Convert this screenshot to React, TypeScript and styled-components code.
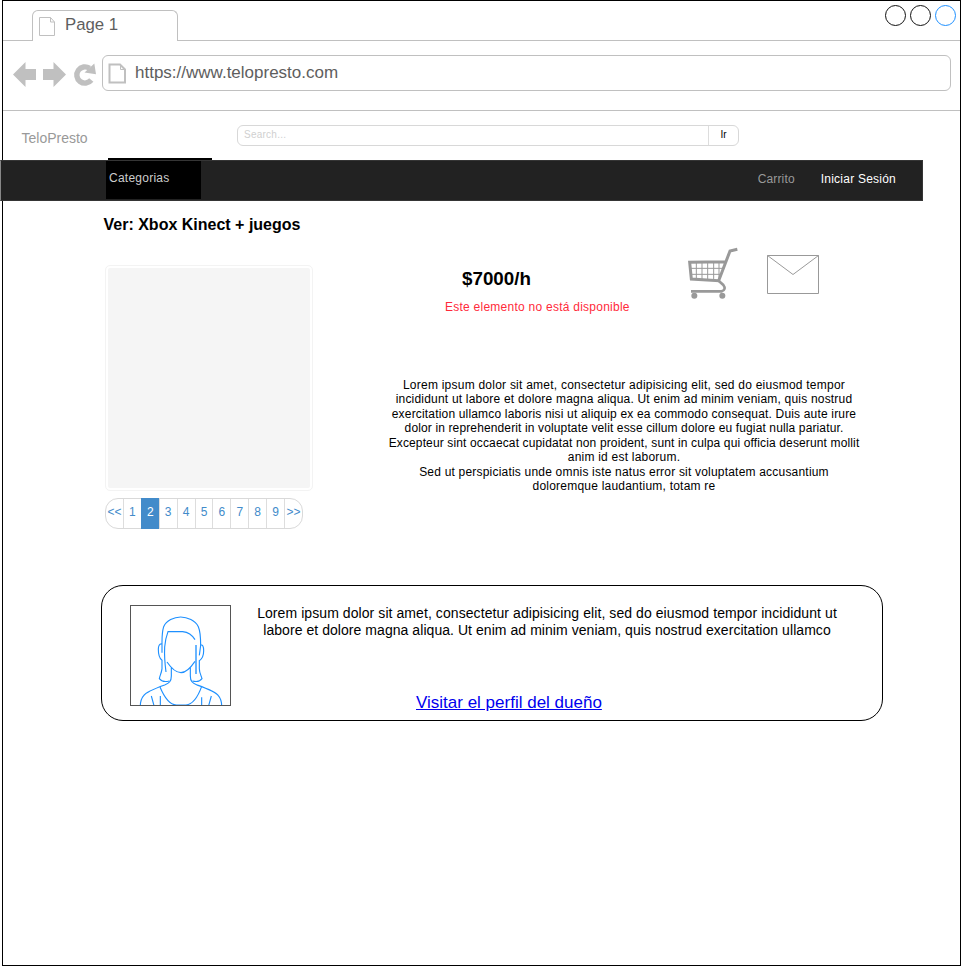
import React from "react";
import styled, { createGlobalStyle } from "styled-components";

const GlobalStyle = createGlobalStyle`
  * { box-sizing: border-box; }
  body { margin: 0; background: #fff; font-family: "Liberation Sans", Arial, sans-serif; color: #000; }
`;

const Frame = styled.div`
  width: 959px;
  height: 966px;
  margin-left: 2px;
  border: 1px solid #000;
  display: flex;
  flex-direction: column;
`;

const TabStrip = styled.div`
  height: 40px;
  flex: none;
  display: flex;
  justify-content: space-between;
  align-items: flex-start;
  padding: 9px 4px 0 29px;
  border-bottom: 1px solid #c0c0c0;
`;

const Tab = styled.div`
  width: 146px;
  height: 31px;
  display: flex;
  gap: 9px;
  padding: 6px 0 0 5px;
  background: #fff;
  border: 1px solid #c0c0c0;
  border-bottom: 0;
  border-radius: 6px 6px 0 0;
  font-size: 16.8px;
  line-height: 16px;
  color: #5e5e5e;
`;

const WindowButtons = styled.div`
  display: flex;
  gap: 4px;
  margin-top: -5px;
`;

const WindowButton = styled.span<{ $color: string }>`
  width: 21px;
  height: 21px;
  border: 1px solid ${(p) => p.$color};
  border-radius: 50%;
`;

const Toolbar = styled.div`
  height: 70px;
  flex: none;
  display: flex;
  align-items: flex-start;
  padding: 14px 9px 0 10px;
  border-bottom: 1px solid #c0c0c0;
`;

const NavIcons = styled.svg`
  width: 89px;
  height: 36px;
  flex: none;
`;

const AddressBar = styled.div`
  flex: 1;
  height: 36px;
  display: flex;
  gap: 9px;
  padding: 7px 0 0 5px;
  border: 1px solid #c0c0c0;
  border-radius: 6px;
  font-size: 17px;
  line-height: 19px;
  color: #5e5e5e;
`;

const Spaced = styled.span<{ $spacing?: number }>`
  letter-spacing: ${(p) => p.$spacing ?? 0}px;
  white-space: nowrap;
`;

const SiteHeader = styled.header`
  height: 47px;
  flex: none;
  display: flex;
  align-items: flex-start;
  padding: 14px 0 0 18.5px;
`;

const Brand = styled.div`
  width: 215.5px;
  padding-top: 5px;
  font-size: 14px;
  line-height: 16px;
  color: #999;
`;

const SearchBox = styled.div`
  width: 502px;
  height: 21px;
  display: flex;
  border: 1px solid #d8d8d8;
  border-radius: 6px;
  font-size: 10px;
  line-height: 18px;
`;

const SearchField = styled.div`
  flex: 1;
  padding-left: 6px;
  color: #d0d0d0;
`;

const SearchButton = styled.div`
  width: 30px;
  border-left: 1px solid #ddd;
  text-align: center;
`;

const MenuLine = styled.div`
  width: 104px;
  height: 2px;
  flex: none;
  margin-left: 105px;
  background: #000;
`;

const NavBar = styled.nav`
  width: 923px;
  height: 41px;
  flex: none;
  margin-left: -3px;
  display: flex;
  background: #222;
  border: 1px solid #353535;
  border-left-color: #888;
  font-size: 12px;
  line-height: 14px;
`;

const CategoryItem = styled.div`
  width: 95px;
  height: 38px;
  margin-left: 105px;
  padding: 10px 0 0 3px;
  background: #000;
  color: #ccc;
`;

const NavLinks = styled.div`
  display: flex;
  gap: 26px;
  margin-left: auto;
  padding: 11px 26px 0 0;
`;

const NavLink = styled.span<{ $color: string }>`
  color: ${(p) => p.$color};
`;

const Title = styled.h1`
  margin: 15px 0 0 100.5px;
  height: 49px;
  flex: none;
  font-size: 16px;
  line-height: 18px;
`;

const Product = styled.section`
  display: flex;
  height: 320px;
  flex: none;
  padding-left: 102px;
`;

const Gallery = styled.div`
  width: 208px;
  display: flex;
  flex-direction: column;
  gap: 7px;
`;

const Photo = styled.div`
  height: 226px;
  padding: 2px;
  border: 1px solid #f3f3f3;
  border-radius: 5px;
  background: #f5f5f5 content-box;
`;

const Pagination = styled.div`
  width: 198px;
  height: 31px;
  display: flex;
  border: 1px solid #d9d9d9;
  border-radius: 13px;
  font-size: 12px;
  line-height: 27px;
  color: #428bca;
  text-align: center;
`;

const PageItem = styled.span<{ $active: boolean }>`
  flex: 1;
  min-width: 0;
  margin: ${(p) => (p.$active ? "-1px 0" : "0")};
  padding-top: ${(p) => (p.$active ? 1 : 0)}px;
  background: ${(p) => (p.$active ? "#428bca" : "transparent")};
  color: ${(p) => (p.$active ? "#fff" : "inherit")};
  border-left: 1px solid ${(p) => (p.$active ? "#428bca" : "#ddd")};
  &:first-child { border-left-color: transparent; margin-left: -1px; }
`;

const Info = styled.div`
  width: 480px;
  margin-left: 71px;
  display: flex;
  flex-direction: column;
`;

const Offer = styled.div`
  height: 112px;
  display: flex;
  margin-top: -18px;
`;

const PriceBlock = styled.div`
  width: 303px;
  padding: 21px 0 0 61px;
`;

const Price = styled.div`
  padding-left: 17px;
  font-size: 18.8px;
  font-weight: bold;
  line-height: 22px;
`;

const Unavailable = styled.div`
  margin-top: 10px;
  font-size: 12px;
  line-height: 14px;
  color: #ff2a3a;
`;

const CartIcon = styled.svg`
  width: 54px;
  height: 54px;
`;

const MailIcon = styled.svg`
  width: 53px;
  height: 40px;
  margin: 8px 0 0 26px;
`;

const Description = styled.div`
  margin-top: 19px;
  display: flex;
  flex-direction: column;
  align-items: center;
  font-size: 12px;
  line-height: 14.45px;
`;

const OwnerCard = styled.section`
  width: 782px;
  height: 136px;
  flex: none;
  margin-left: 98px;
  display: flex;
  border: 1px solid #000;
  border-radius: 22px;
  padding: 19px 0 0 28px;
`;

const Avatar = styled.svg`
  width: 101px;
  height: 101px;
  flex: none;
`;

const OwnerInfo = styled.div`
  width: 581px;
  margin-left: 25.5px;
  display: flex;
  flex-direction: column;
  align-items: center;
  font-size: 14px;
  line-height: 17px;
`;

const ProfileLink = styled.a`
  align-self: flex-start;
  margin: 54px 0 0 159.5px;
  font-size: 17px;
  line-height: 20px;
  color: #0000ee;
  text-decoration: underline;
`;

function FileIcon({ bold = false }: { bold?: boolean }) {
  return (
    <svg width="18" height="22" viewBox="0 0 18 22" fill="none" stroke="#c0c0c0" strokeWidth={bold ? 2 : 1}>
      <path d={bold ? "M1.5 1.5H12L17 6.5V19.5H1.5Z" : "M1.5 .5H12.5L16.5 5V18.5H1.5Z"} />
      <path strokeWidth="1" d={bold ? "M12.5 2V6.5H17" : "M12.5 .5V5H16.5"} />
    </svg>
  );
}

const description: [string, number][] = [
  ["Lorem ipsum dolor sit amet, consectetur adipisicing elit, sed do eiusmod tempor", 0.235],
  ["incididunt ut labore et dolore magna aliqua. Ut enim ad minim veniam, quis nostrud", 0.2],
  ["exercitation ullamco laboris nisi ut aliquip ex ea commodo consequat. Duis aute irure", 0.175],
  ["dolor in reprehenderit in voluptate velit esse cillum dolore eu fugiat nulla pariatur.", 0.13],
  ["Excepteur sint occaecat cupidatat non proident, sunt in culpa qui officia deserunt mollit", 0.135],
  ["anim id est laborum.", 0.22],
  ["Sed ut perspiciatis unde omnis iste natus error sit voluptatem accusantium", 0.2],
  ["doloremque laudantium, totam re", 0.22],
];

const pages = ["<<", "1", "2", "3", "4", "5", "6", "7", "8", "9", ">>"];

export default function App() {
  return (
    <>
      <GlobalStyle />
      <Frame>
        <TabStrip>
          <Tab>
            <FileIcon />
            <Spaced>Page 1</Spaced>
          </Tab>
          <WindowButtons>
            <WindowButton $color="#111" />
            <WindowButton $color="#111" />
            <WindowButton $color="#1e90ff" />
          </WindowButtons>
        </TabStrip>
        <Toolbar>
          <NavIcons viewBox="13 55 89 36">
            <path fill="#c0c0c0" d="M13 74.5L25.5 62V69H36V80H25.5V87ZM66 74.5L53.5 62V69H43V80H53.5V87Z" />
            <path fill="none" stroke="#c0c0c0" strokeWidth="5.4" d="M89.5 68.3A8.1 8.1 0 1 0 91.3 80" />
            <path fill="#c0c0c0" d="M94.3 63.5L96 74.2L84.5 72.5Z" />
          </NavIcons>
          <AddressBar>
            <FileIcon bold />
            <Spaced>https://www.telopresto.com</Spaced>
          </AddressBar>
        </Toolbar>
        <SiteHeader>
          <Brand>TeloPresto</Brand>
          <SearchBox>
            <SearchField><Spaced $spacing={0.25}>Search...</Spaced></SearchField>
            <SearchButton>Ir</SearchButton>
          </SearchBox>
        </SiteHeader>
        <MenuLine />
        <NavBar>
          <CategoryItem><Spaced $spacing={0.25}>Categorias</Spaced></CategoryItem>
          <NavLinks>
            <NavLink $color="#999"><Spaced $spacing={0.15}>Carrito</Spaced></NavLink>
            <NavLink $color="#fff"><Spaced $spacing={0.23}>Iniciar Sesión</Spaced></NavLink>
          </NavLinks>
        </NavBar>
        <Title>Ver: Xbox Kinect + juegos</Title>
        <Product>
          <Gallery>
            <Photo />
            <Pagination>
              {pages.map((page) => (
                <PageItem key={page} $active={page === "2"}>{page}</PageItem>
              ))}
            </Pagination>
          </Gallery>
          <Info>
            <Offer>
              <PriceBlock>
                <Price>$7000/h</Price>
                <Unavailable><Spaced $spacing={0.25}>Este elemento no está disponible</Spaced></Unavailable>
              </PriceBlock>
              <CartIcon viewBox="21 15 162 162" fill="none" stroke="#999">
                <path strokeWidth="9" d="M172 22L150 27L116 116L34 111L29 61L136 59" />
                <path strokeWidth="8" d="M114 115L130 129Q140 142 125 148H33" />
                <path strokeWidth="3" d="M49 60V112M66 60V113M83 60V114M101 60V115M117 60V112M30 79H130M32 97H124" />
                <circle cx="43" cy="161" r="9" fill="#999" stroke="none" />
                <circle cx="127" cy="161" r="9" fill="#999" stroke="none" />
              </CartIcon>
              <MailIcon viewBox="0 0 53 40" fill="none" stroke="#999">
                <path d="M.5 .5H51.5V38.5H.5ZL26 19.5L51.5 .5" />
              </MailIcon>
            </Offer>
            <Description>
              {description.map(([text, spacing]) => (
                <Spaced key={text} $spacing={spacing}>{text}</Spaced>
              ))}
            </Description>
          </Info>
        </Product>
        <OwnerCard>
          <Avatar viewBox="6 9 303 303" fill="none" stroke="#1e90ff" strokeWidth="3.4">
            <path d="M102 152V120C102 102 104 84 107 74C115 56 138 45 158 45C178 45 202 56 211 74C217 88 218 112 218 130L214 160" />
            <path d="M114 210C110 180 109 155 110 135C112 115 115 102 120 89H164C182 91 193 100 201 113" />
            <path strokeWidth="4" d="M204 129V216" />
            <path d="M102 126C94 124 91 132 91 142C91 158 95 170 102 175V200C101 212 95 222 94 230C101 240 112 240 124 237M217 130C224 126 227 134 227 146C227 158 223 170 214 176V200C214 212 220 222 222 230C215 240 205 240 193 237" />
            <path d="M117 180C130 199 144 212 159 212C174 212 188 197 201 178M130 196V222C130 238 124 243 110 249C85 258 55 269 47 281C40 289 37 300 37 312M187 196V222C187 238 193 243 207 249C232 258 263 269 271 281C278 289 281 300 281 312" />
            <path d="M96 255C108 284 126 308 145 309H174C193 307 210 284 221 253M70 282L78 311M250 282L242 311M97 282V311M221 286V311" />
            <rect x="7.5" y="10.5" width="300" height="300" stroke="#555" strokeWidth="3" />
          </Avatar>
          <OwnerInfo>
            <Spaced $spacing={0.075}>Lorem ipsum dolor sit amet, consectetur adipisicing elit, sed do eiusmod tempor incididunt ut</Spaced>
            <Spaced $spacing={0.055}>labore et dolore magna aliqua. Ut enim ad minim veniam, quis nostrud exercitation ullamco</Spaced>
            <ProfileLink><Spaced>Visitar el perfil del dueño</Spaced></ProfileLink>
          </OwnerInfo>
        </OwnerCard>
      </Frame>
    </>
  );
}
